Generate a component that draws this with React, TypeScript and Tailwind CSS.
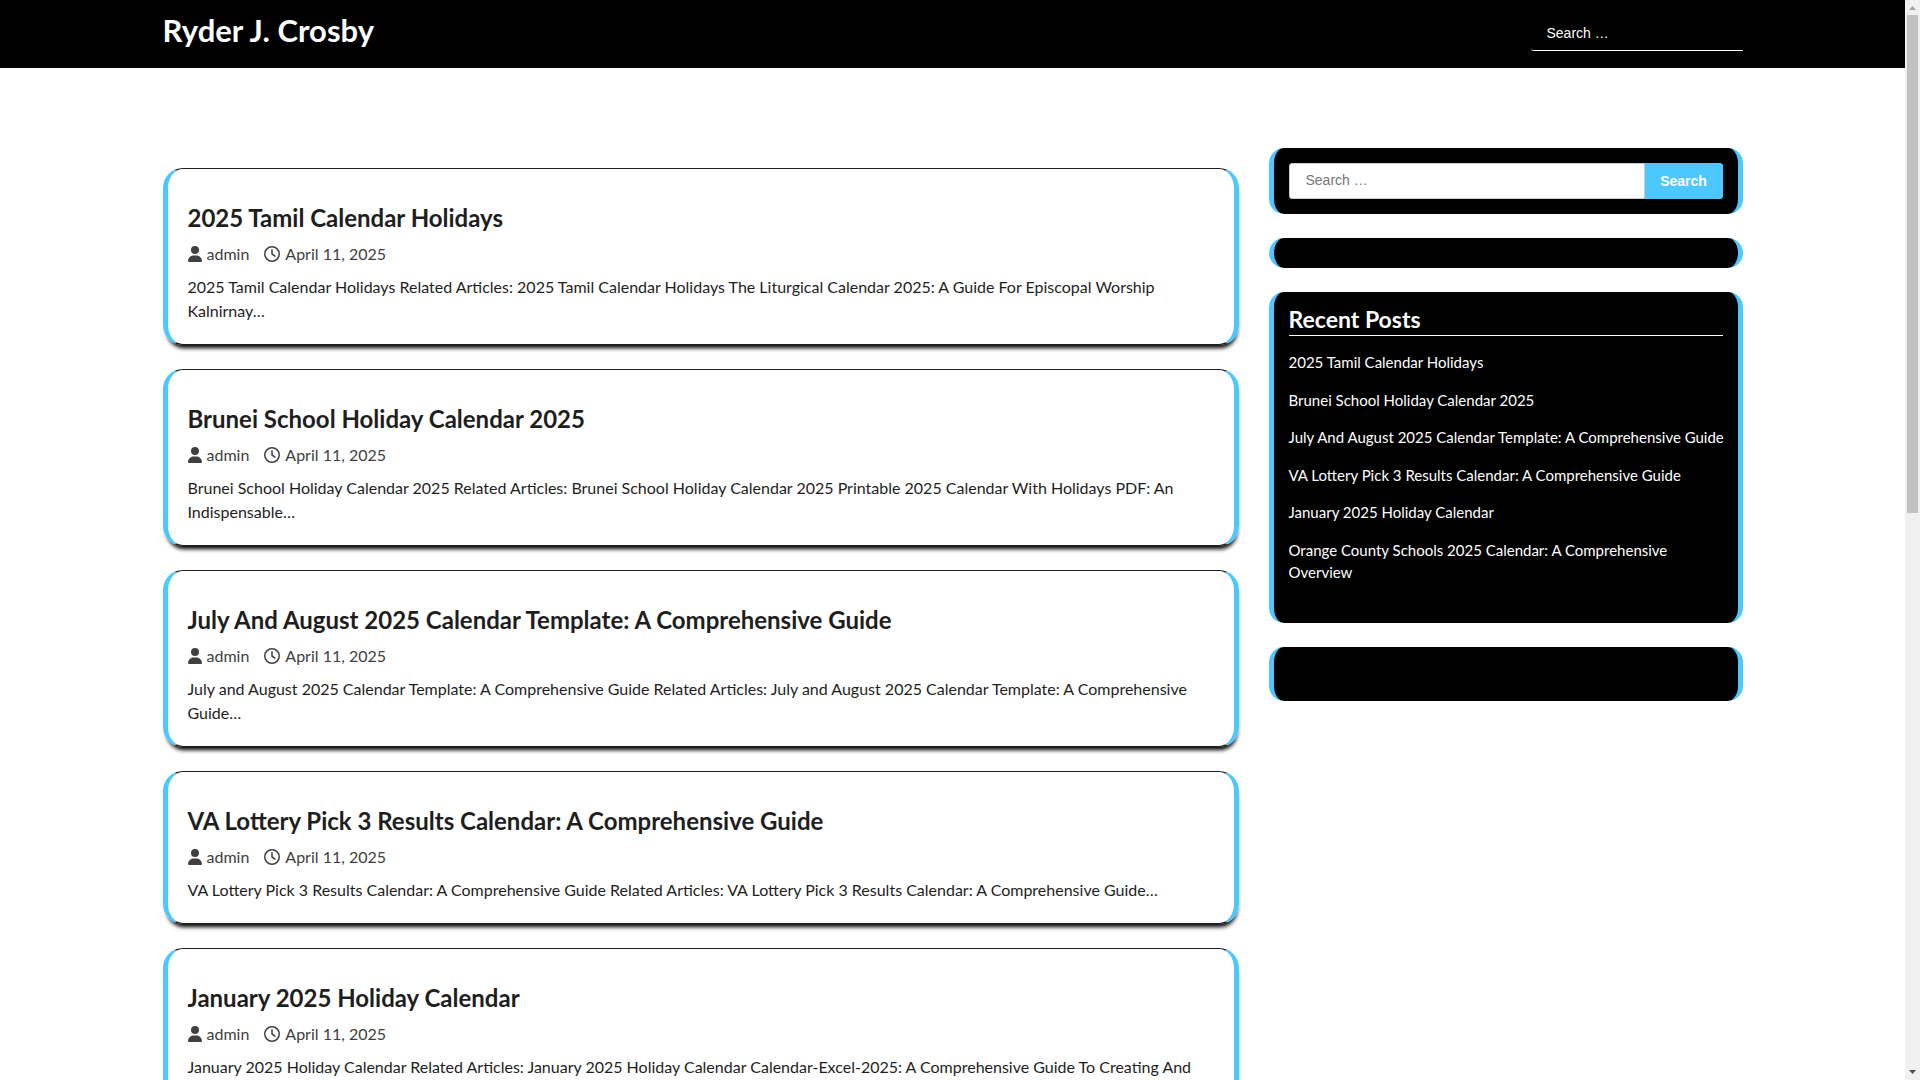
import type { ReactNode } from "react";
import { FaRegClock, FaUser } from "react-icons/fa6";

type Post = { title: string; excerpt: string };

const posts: Post[] = [
  {
    title: "2025 Tamil Calendar Holidays",
    excerpt:
      "2025 Tamil Calendar Holidays Related Articles: 2025 Tamil Calendar Holidays The Liturgical Calendar 2025: A Guide For Episcopal Worship Kalnirnay…",
  },
  {
    title: "Brunei School Holiday Calendar 2025",
    excerpt:
      "Brunei School Holiday Calendar 2025 Related Articles: Brunei School Holiday Calendar 2025 Printable 2025 Calendar With Holidays PDF: An Indispensable…",
  },
  {
    title: "July And August 2025 Calendar Template: A Comprehensive Guide",
    excerpt:
      "July and August 2025 Calendar Template: A Comprehensive Guide Related Articles: July and August 2025 Calendar Template: A Comprehensive Guide…",
  },
  {
    title: "VA Lottery Pick 3 Results Calendar: A Comprehensive Guide",
    excerpt:
      "VA Lottery Pick 3 Results Calendar: A Comprehensive Guide Related Articles: VA Lottery Pick 3 Results Calendar: A Comprehensive Guide…",
  },
  {
    title: "January 2025 Holiday Calendar",
    excerpt:
      "January 2025 Holiday Calendar Related Articles: January 2025 Holiday Calendar Calendar-Excel-2025: A Comprehensive Guide To Creating And",
  },
];

const recent = [
  ...posts.map((p) => p.title),
  "Orange County Schools 2025 Calendar: A Comprehensive Overview",
];

function Header() {
  return (
    <header className="bg-black px-6">
      <div className="mx-auto flex h-[68px] max-w-[1580px] items-start justify-between">
        <a href="#" className="mt-[10px] text-[31px] leading-10 font-bold text-white">
          Ryder J. Crosby
        </a>
        <form className="mt-[15px]" onSubmit={(e) => e.preventDefault()}>
          <input
            type="search"
            aria-label="Search"
            placeholder="Search …"
            className="block h-9 w-[212px] rounded-l-[3px] border-b border-white bg-black px-4 font-['Liberation_Sans',sans-serif] text-sm text-white outline-none placeholder:text-white"
          />
        </form>
      </div>
    </header>
  );
}

function PostCard({ title, excerpt }: Post) {
  return (
    <article className="rounded-[20px] border-x-[5px] border-y border-x-[#4dc7ff] border-y-[#1e1e1e] px-5 pt-[31px] pb-[21px] shadow-[1px_6px_4px_-3px_#000]">
      <h2 className="text-2xl leading-9 font-bold">
        <a href="#">{title}</a>
      </h2>
      <div className="mt-[6px] flex gap-[15px] leading-6 text-[#404040]">
        <a href="#" className="flex items-center gap-[5px]">
          <FaUser className="h-4 w-[14px]" />
          admin
        </a>
        <a href="#" className="flex items-center gap-[5px]">
          <FaRegClock className="size-4" />
          April 11, 2025
        </a>
      </div>
      <p className="mt-[9px] leading-6">{excerpt}</p>
    </article>
  );
}

function Widget({ children }: { children?: ReactNode }) {
  return (
    <section className="rounded-[15px] border-x-[5px] border-[#4dc7ff] bg-black p-[15px] text-white">
      {children}
    </section>
  );
}

function Sidebar() {
  return (
    <aside className="flex flex-col gap-6">
      <Widget>
        <form
          className="flex font-['Liberation_Sans',sans-serif] text-sm"
          onSubmit={(e) => e.preventDefault()}
        >
          <input
            type="search"
            aria-label="Search"
            placeholder="Search …"
            className="h-9 min-w-0 flex-1 rounded-l-[3px] border border-[#ccc] bg-white px-4 pb-0.5 text-black outline-none placeholder:text-[#757575]"
          />
          <button type="submit" className="h-9 w-[78px] rounded-r-[3px] bg-[#4dc7ff] font-bold text-white">
            Search
          </button>
        </form>
      </Widget>
      <Widget />
      <Widget>
        <h2 className="border-b border-white pb-[3px] text-[23px] leading-[25px] font-bold">Recent Posts</h2>
        <ul className="mt-[15px] -mr-2 mb-6 flex flex-col gap-[15px] text-[15px] leading-normal">
          {recent.map((t) => (
            <li key={t}>
              <a href="#">{t}</a>
            </li>
          ))}
        </ul>
      </Widget>
      <Widget>
        <div className="h-6" />
      </Widget>
    </aside>
  );
}

function ScrollTrack() {
  return (
    <div aria-hidden="true" className="flex w-[15px] flex-none flex-col items-center bg-[#f0f0f0]">
      <svg viewBox="0 0 15 15" className="h-[15px] w-[15px] fill-[#a3a3a3]">
        <path d="M4 10h7L7.500 6z" />
      </svg>
      <div className="flex w-[11px] flex-1 flex-col">
        <div className="h-[47.400%] bg-[#c1c1c1]" />
      </div>
      <svg viewBox="0 0 15 15" className="h-[15px] w-[15px] fill-[#505050]">
        <path d="M4 5h7L7.500 9z" />
      </svg>
    </div>
  );
}

export default function App() {
  return (
    <div className="flex h-screen overflow-hidden bg-white font-[Lato,sans-serif] text-base text-[#1e1e1e]">
      <div className="min-w-0 flex-1 overflow-hidden">
        <Header />
        <div className="px-6">
          <div className="mx-auto grid max-w-[1580px] grid-cols-[minmax(0,1fr)_30%] gap-[30px] pt-20">
            <main className="flex flex-col gap-6 pt-5">
              {posts.map((p) => (
                <PostCard key={p.title} {...p} />
              ))}
            </main>
            <Sidebar />
          </div>
        </div>
      </div>
      <ScrollTrack />
    </div>
  );
}
